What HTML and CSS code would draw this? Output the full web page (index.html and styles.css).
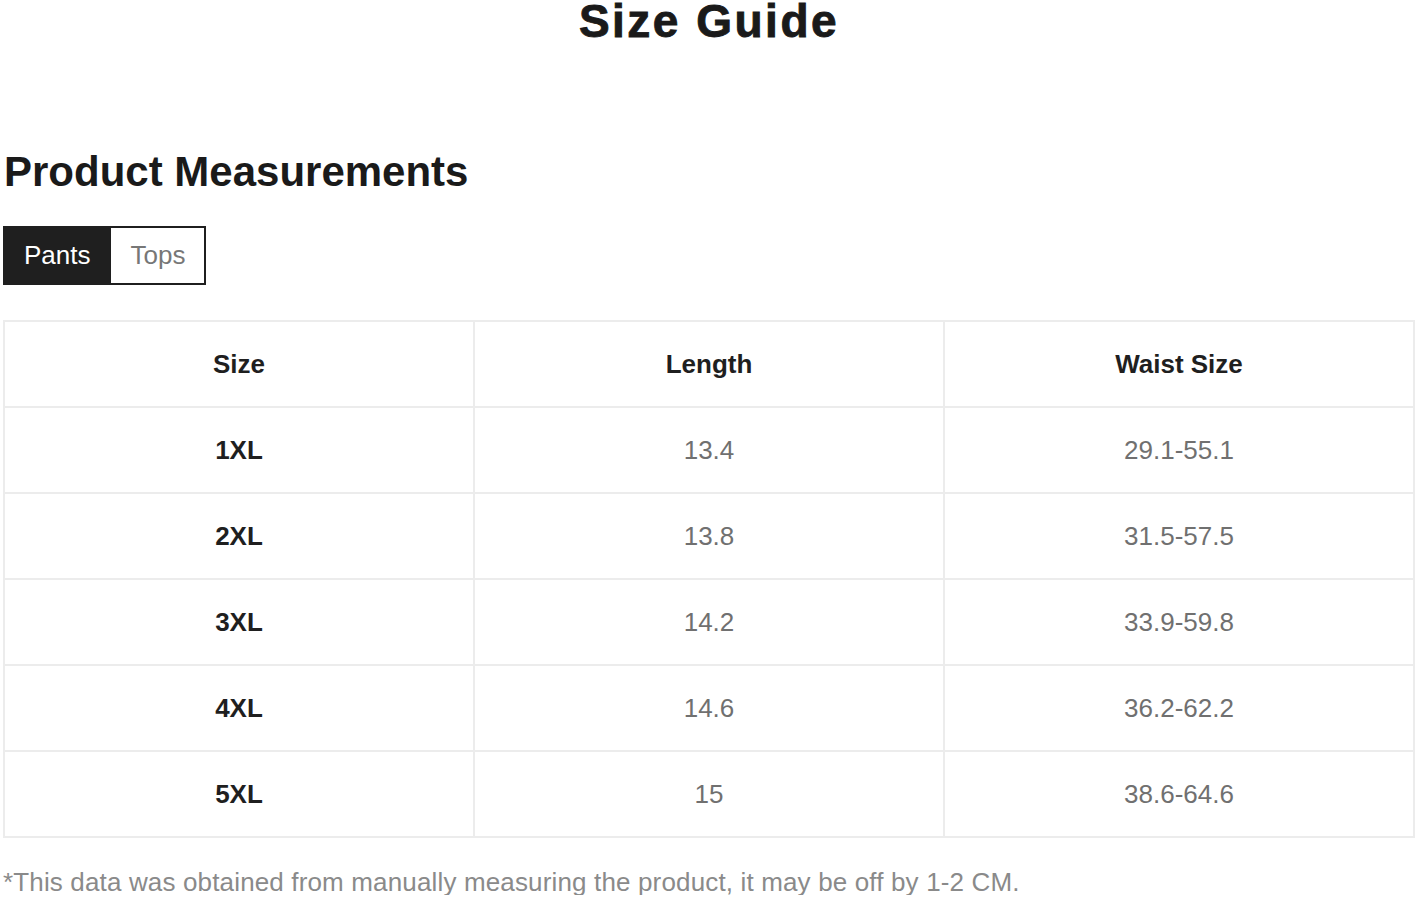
FILE: index.html
```html
<!DOCTYPE html>
<html>
<head>
<meta charset="utf-8">
<link rel="stylesheet" href="styles.css">
</head>
<body>
<div class="page">
  <h1 class="title">Size Guide</h1>
  <h2 class="subtitle">Product Measurements</h2>
  <div class="tabs">
    <div class="tab tab-active">Pants</div>
    <div class="tab">Tops</div>
  </div>
  <table class="sizes">
    <thead>
      <tr><th>Size</th><th>Length</th><th>Waist Size</th></tr>
    </thead>
    <tbody>
      <tr><td class="size">1XL</td><td>13.4</td><td>29.1-55.1</td></tr>
      <tr><td class="size">2XL</td><td>13.8</td><td>31.5-57.5</td></tr>
      <tr><td class="size">3XL</td><td>14.2</td><td>33.9-59.8</td></tr>
      <tr><td class="size">4XL</td><td>14.6</td><td>36.2-62.2</td></tr>
      <tr><td class="size">5XL</td><td>15</td><td>38.6-64.6</td></tr>
    </tbody>
  </table>
  <p class="note">*This data was obtained from manually measuring the product, it may be off by 1-2 CM.</p>
</div>
</body>
</html>
```
FILE: styles.css
```css
html, body {
  margin: 0;
  padding: 0;
  background: #ffffff;
}
body {
  font-family: "Liberation Sans", Arial, sans-serif;
  color: #1a1a1a;
}
.page {
  padding: 0 4px 0 3px;
}
.title {
  margin: 0;
  font-size: 46px;
  line-height: 42px;
  font-weight: 900;
  letter-spacing: 2.5px;
  text-align: center;
  color: #1a1a1a;
  -webkit-text-stroke: 0.9px #1a1a1a;
}
.subtitle {
  margin: 109px 0 0 1px;
  font-size: 42px;
  line-height: 42px;
  font-weight: 700;
  color: #1a1a1a;
}
.tabs {
  display: flex;
  margin-top: 33px;
  width: max-content;
  border: 2px solid #1f1f1f;
}
.tab {
  height: 55px;
  display: flex;
  align-items: center;
  font-size: 26px;
  color: #777777;
  padding: 0 19px 0 20px;
}
.tab-active {
  background: #1f1f1f;
  color: #ffffff;
  padding: 0 20px 0 19px;
}
.sizes {
  margin-top: 35px;
  width: 100%;
  border-collapse: collapse;
  table-layout: fixed;
}
.sizes th, .sizes td {
  border: 2px solid #ececec;
  height: 84px;
  padding: 0;
  text-align: center;
  vertical-align: middle;
  font-size: 26px;
}
.sizes th {
  font-weight: 700;
  color: #1f1f1f;
}
.sizes td {
  color: #707070;
}
.sizes td.size {
  font-weight: 700;
  color: #1f1f1f;
}
.note {
  margin: 31px 0 0 0;
  font-size: 26px;
  line-height: 26px;
  letter-spacing: 0.15px;
  color: #8a8a8a;
}
```
